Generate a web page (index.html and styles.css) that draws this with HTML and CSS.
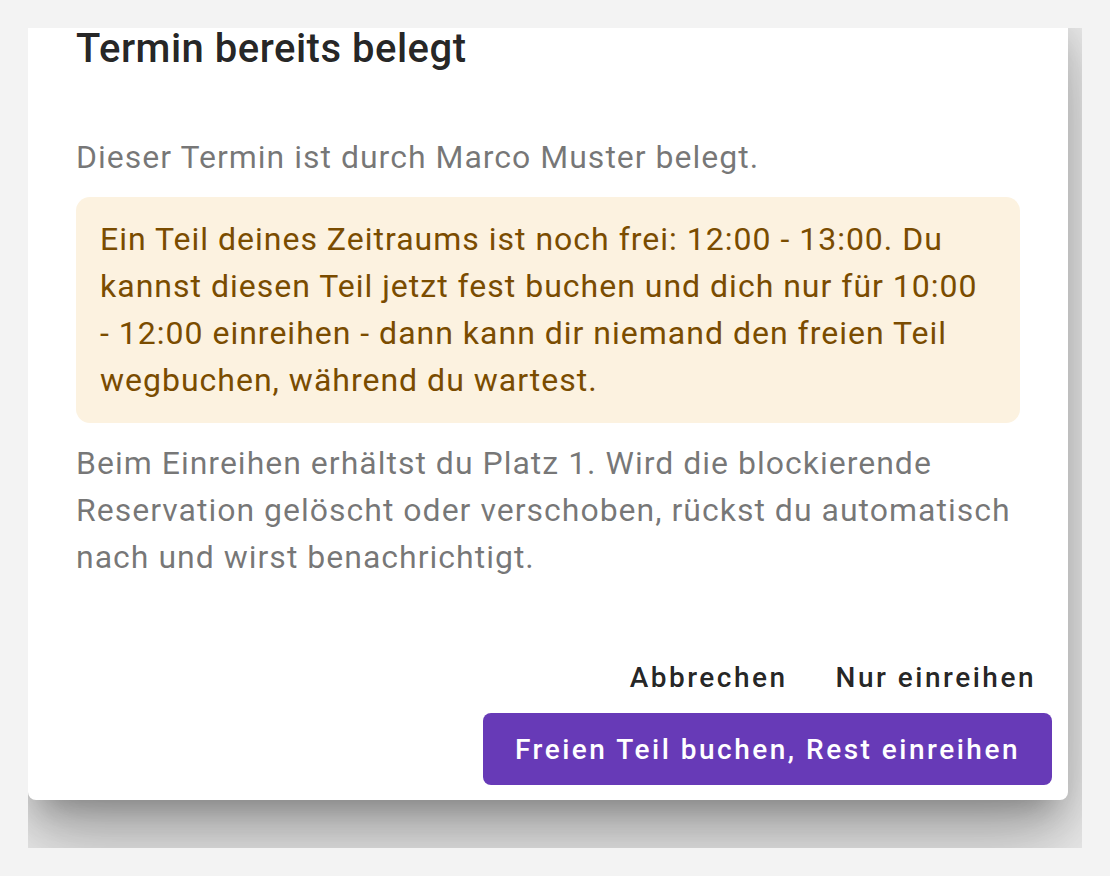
FILE: index.html
```html
<!DOCTYPE html>
<html lang="de">
<head>
    <meta charset="UTF-8">
    <title>Termin bereits belegt</title>
    <link rel="stylesheet" href="styles.css">
</head>
<body>
    <div class="frame">
        <div class="dialog">
            <h2 class="dialog-title">Termin bereits belegt</h2>
            <div class="dialog-content">
                <p class="muted">Dieser Termin ist durch Marco Muster belegt.</p>
                <div class="hint">
                    Ein Teil deines Zeitraums ist noch frei: 12:00 - 13:00. Du kannst diesen Teil jetzt fest buchen und dich nur für 10:00 - 12:00 einreihen - dann kann dir niemand den freien Teil wegbuchen, während du wartest.
                </div>
                <p class="muted">Beim Einreihen erhältst du Platz 1. Wird die blockierende Reservation gelöscht oder verschoben, rückst du automatisch nach und wirst benachrichtigt.</p>
            </div>
            <div class="dialog-actions">
                <button class="btn btn-text">Abbrechen</button>
                <button class="btn btn-text">Nur einreihen</button>
                <button class="btn btn-primary">Freien Teil buchen, Rest einreihen</button>
            </div>
        </div>
    </div>
</body>
</html>
```

FILE: styles.css
```css
body {
    margin: 0;
    background: #f3f3f3;
    font-family: Roboto, 'Noto Sans', sans-serif;
}

/* visible part of the page, the dialog runs off the top */
.frame {
    margin: 28px;
    width: 1054px;
    height: 820px;
    overflow: hidden;
    display: flex;
    flex-direction: column;
    justify-content: flex-end;
    padding-bottom: 48px;
    box-sizing: border-box;
}

.dialog {
    width: 1040px;
    flex-shrink: 0;
    background: #fff;
    border-radius: 8px;
    box-shadow: 0 22px 30px -14px rgba(0, 0, 0, 0.28),
                0 48px 76px 6px rgba(0, 0, 0, 0.18),
                0 18px 92px 16px rgba(0, 0, 0, 0.14);
}

.dialog-title {
    margin: 0;
    padding: 24px 48px 25px;
    font-size: 40px;
    font-weight: 500;
    line-height: 40px;
    color: rgba(0, 0, 0, 0.87);
    letter-spacing: 0.5px;
}

.dialog-content {
    padding: 40px 48px 48px;
    font-size: 32px;
    line-height: 47px;
    letter-spacing: 1px;
}

.muted {
    margin: 0;
    color: rgba(0, 0, 0, 0.54);
}

.hint {
    margin: 16px 0 17px;
    padding: 19px 24px;
    background: #fcf2e0;
    color: #7a4c00;
    border-radius: 14px;
}

.dialog-actions {
    display: flex;
    flex-wrap: wrap;
    justify-content: flex-end;
    column-gap: 16px;
    padding: 12px 16px 15px;
}

.btn {
    height: 72px;
    padding: 0 16px;
    border: none;
    border-radius: 8px;
    background: none;
    font-family: inherit;
    font-size: 28px;
    font-weight: 500;
    letter-spacing: 2.5px;
    cursor: pointer;
}

.btn-text {
    color: rgba(0, 0, 0, 0.87);
}

.btn-primary {
    padding: 0 32px;
    background: #673ab7;
    color: #fff;
}
```
